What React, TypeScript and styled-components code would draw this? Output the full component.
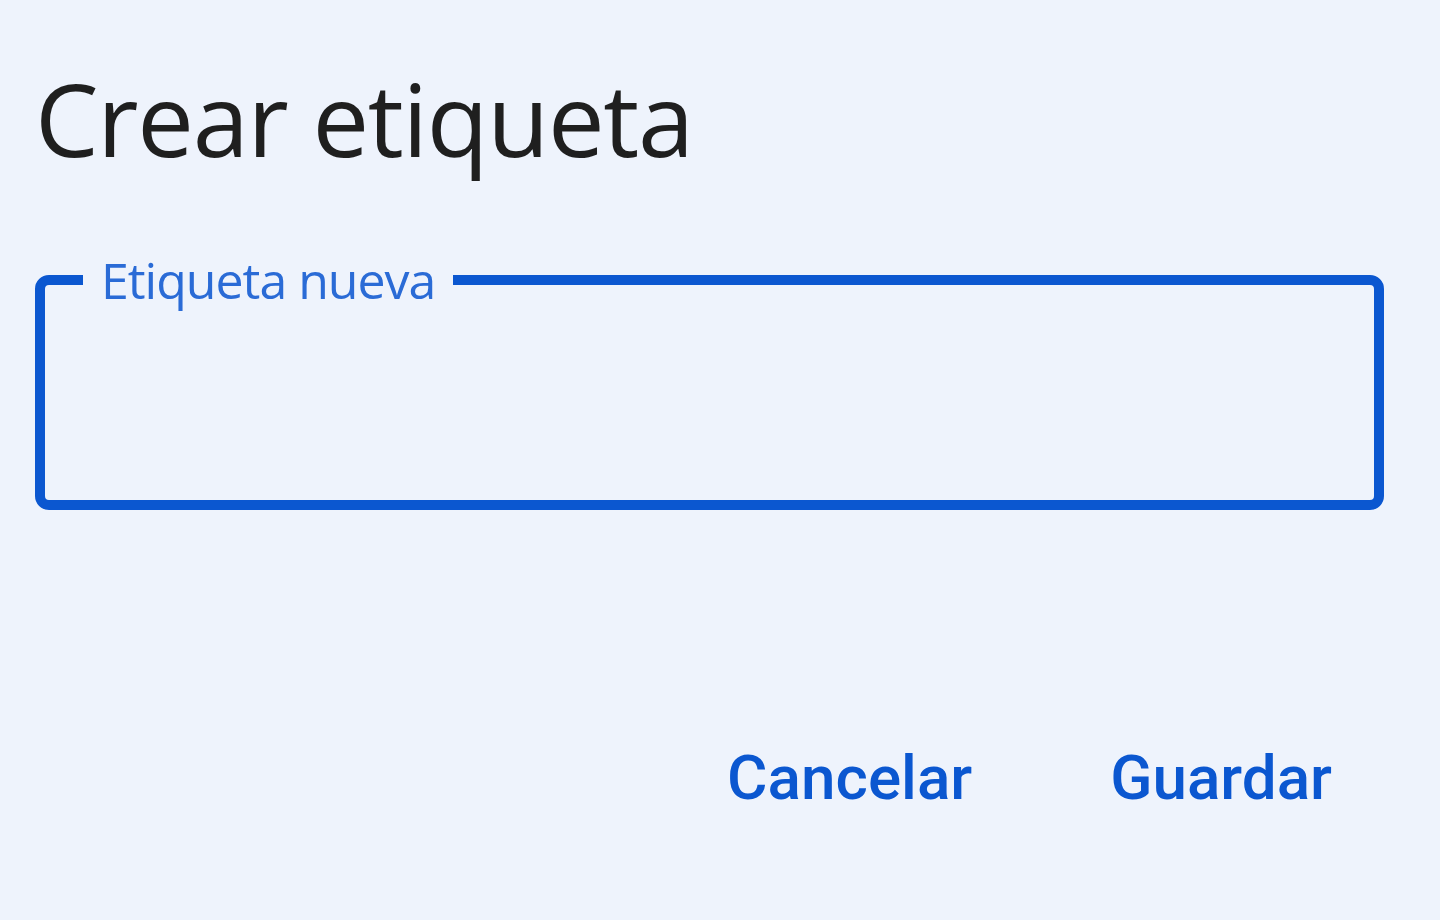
import React from "react"
import styled, { createGlobalStyle } from "styled-components"

const GlobalStyle = createGlobalStyle`
    html, body {
        margin: 0;
        padding: 0;
        background: #eef3fc;
    }
    body {
        font-family: "Open Sans", Roboto, "Liberation Sans", sans-serif;
    }
`

const Dialog = styled.div`
    width: 1440px;
    height: 920px;
    box-sizing: border-box;
    padding: 53px 108px 0 35px;
    display: flex;
    flex-direction: column;
`

const Title = styled.h1`
    margin: 0;
    font-size: 101px;
    font-weight: 400;
    line-height: 130px;
    color: #1f1f1f;
    letter-spacing: -1.3px;
`

const Field = styled.fieldset`
    margin: 77px -52px 0 0;
    padding: 0;
    height: 250px;
    box-sizing: border-box;
    border: 10px solid #0b57d0;
    border-radius: 14px;
`

const Legend = styled.legend`
    margin-left: 38px;
    padding: 0 18px;
    font-size: 50px;
    line-height: 40px;
    color: #2a6bd6;
    letter-spacing: -1px;
`

const Actions = styled.div`
    display: flex;
    justify-content: flex-end;
    gap: 138px;
    margin-top: 231px;
`

const TextButton = styled.button`
    background: none;
    border: none;
    padding: 0;
    font-family: Roboto, "Open Sans", sans-serif;
    font-size: 62px;
    font-weight: 500;
    color: #0b57d0;
    cursor: pointer;
`

export default function App() {
    return (
        <>
            <GlobalStyle />
            <Dialog>
                <Title>Crear etiqueta</Title>
                <Field>
                    <Legend>Etiqueta nueva</Legend>
                </Field>
                <Actions>
                    <TextButton>Cancelar</TextButton>
                    <TextButton>Guardar</TextButton>
                </Actions>
            </Dialog>
        </>
    )
}
